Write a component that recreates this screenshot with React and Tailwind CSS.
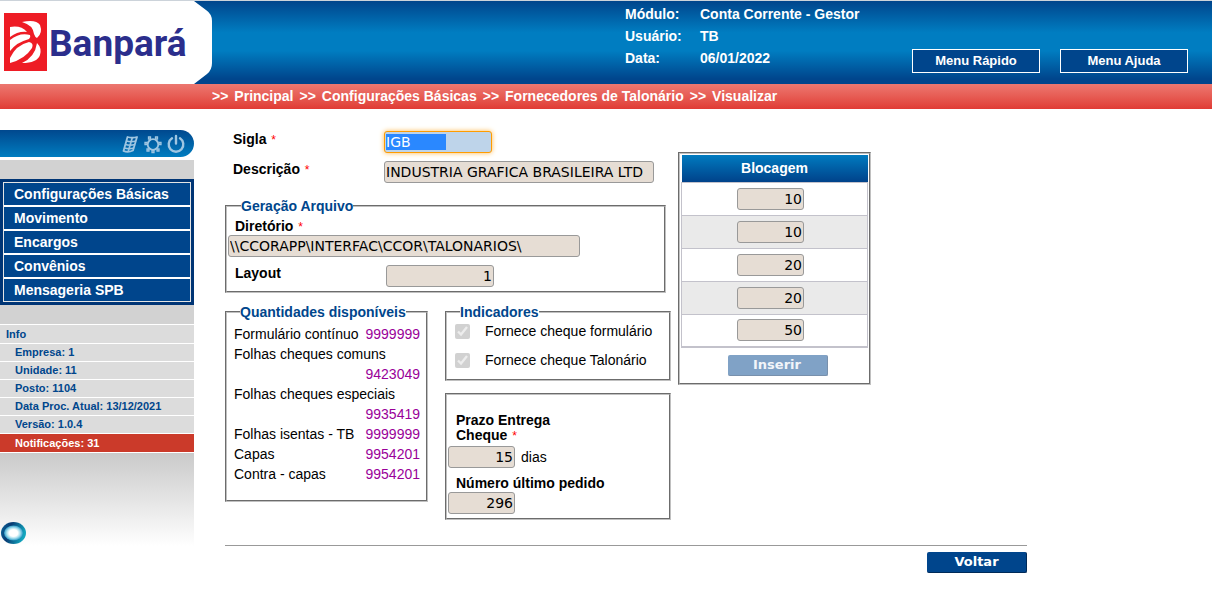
import { useEffect, useRef } from "react";

const inputBase =
  "h-[22px] rounded-[3px] border border-[#999] bg-[#e6ddd4] px-px font-['DejaVu_Sans',Verdana,sans-serif] text-[14px] leading-5 text-black outline-none";

const panel = "min-w-0 [border-style:groove] border-2 border-[#c0c0c0]";
const legend = "ml-[13px] text-[14px] font-bold leading-4 text-[#00468c]";

function Required() {
  return <span className="pl-px text-[12px] font-normal leading-none text-[#f00]">*</span>;
}

function Logo() {
  return (
    <div className="relative h-[83px] w-[213px] shrink-0">
      <svg className="absolute inset-0" width="213" height="83" viewBox="0 0 213 83" aria-hidden="true">
        <path d="M0 0H194L206 9Q212 13 212 20V62Q212 69 207 73L194 83H0Z" fill="#fff" />
        <rect x="4" y="12" width="43" height="58" fill="#ee1c25" />
        <path d="M10 26Q21 24 27 31Q18 30 10 36Z" fill="#fff" />
        <path d="M22 21Q36 18 40 24Q43 32 37 37Q35 36 34 33Q33 24 22 21Z" fill="#fff" />
        <path d="M10 39Q20 31 30 34Q31 36 29 38Q17 41 10 50Z" fill="#fff" />
        <path d="M10 62V57Q16 44 29 41Q34 42 32 47Q25 58 10 62Z" fill="#fff" />
        <path d="M37 42Q42 47 40 54Q37 62 22 62Q35 56 37 42Z" fill="#fff" />
      </svg>
      <span className="absolute left-[49px] top-5 font-[Roboto,sans-serif] text-[37px] font-bold leading-[46px] text-[#2b2e8c]">
        Banpará
      </span>
    </div>
  );
}

function Header() {
  const info = [
    ["Módulo:", "Conta Corrente - Gestor"],
    ["Usuário:", "TB"],
    ["Data:", "06/01/2022"],
  ];
  return (
    <header className="flex justify-between border-t border-[#ccd3da] bg-[linear-gradient(#00458c,#007dc1_38%,#007dc1_60%,#00458c_94%)] text-white">
      <Logo />
      <div className="flex items-end">
        <dl className="grid w-[287px] grid-cols-[75px_1fr] self-start pt-[2px] text-[14px] font-bold leading-[22px]">
          {info.map(([k, v]) => (
            <div key={k} className="contents">
              <dt>{k}</dt>
              <dd>{v}</dd>
            </div>
          ))}
        </dl>
        <div className="mb-[11px] mr-6 flex gap-5">
          {["Menu Rápido", "Menu Ajuda"].map((t) => (
            <button key={t} className="h-6 w-32 border border-white bg-[#00458c] text-[13px] font-bold leading-5">
              {t}
            </button>
          ))}
        </div>
      </div>
    </header>
  );
}

function Breadcrumb() {
  return (
    <nav aria-label="Caminho" className="bg-linear-to-b from-[#ec7770] to-[#e03a34] pl-[212px]">
      <ol className="flex gap-[6px] text-[14px] font-bold leading-[25px] text-white">
        {["Principal", "Configurações Básicas", "Fornecedores de Talonário", "Visualizar"].map((t) => (
          <li key={t} className="flex gap-[6px]">
            <span>&gt;&gt;</span>
            <a href="#">{t}</a>
          </li>
        ))}
      </ol>
    </nav>
  );
}

function Sidebar() {
  const menu = ["Configurações Básicas", "Movimento", "Encargos", "Convênios", "Mensageria SPB"];
  const info = ["Empresa: 1", "Unidade: 11", "Posto: 1104", "Data Proc. Atual: 13/12/2021", "Versão: 1.0.4"];
  return (
    <aside className="w-[194px] shrink-0 pt-[21px] font-bold">
      <div className="mb-[3px] flex h-[27px] items-center justify-end gap-1 rounded-r-[14px] bg-linear-to-b from-[#00488e] to-[#007dc0] pr-[9px] text-[#9fc6e2]">
        <button aria-label="Teclado">
          <svg width="18" height="18" viewBox="0 0 18 18" fill="none" stroke="currentColor" strokeLinejoin="round">
            <path d="M6.5 2Q11 3.5 16 2L12 15.5Q7 18 2.5 16Z" strokeWidth="1.8" />
            <path d="M5.5 6Q10 7.5 15 6M4.5 9.5Q9 11 14 9.5M3.5 13Q8 14.5 13 13M11.2 3L7.2 16.5" strokeWidth="1.7" />
          </svg>
        </button>
        <button aria-label="Configurações">
          <svg width="20" height="20" viewBox="0 0 20 20" fill="none" stroke="currentColor">
            <circle cx="10" cy="10.5" r="5.3" strokeWidth="1.8" />
            <path
              d="M5.5 3h2v2h-2zM12.500 3h2v2h-2zM2 8.500h2v2h-2zM16 8.500h2v2h-2zM4 15h2v2h-2zM14 15h2v2h-2zM9 16.500h2v2h-2z"
              strokeWidth="1.3"
            />
          </svg>
        </button>
        <button aria-label="Sair">
          <svg width="18" height="20" viewBox="0 0 18 20" fill="none" stroke="currentColor" strokeWidth="2.4" strokeLinecap="round">
            <path d="M5 4.3A7.3 7.3 0 1 0 13 4.3M9 2V9.5" />
          </svg>
        </button>
      </div>
      <div className="bg-[#d2d2d2] pt-[19px]">
        <div className="bg-[#003575] p-[3px]">
          <ul className="divide-y-2 divide-white border border-[#e4e4e4] bg-[#00458c] text-[14px] leading-[22px] text-white">
            {menu.map((t) => (
              <li key={t}>
                <a href="#" className="block pl-[10px]">
                  {t}
                </a>
              </li>
            ))}
          </ul>
        </div>
        <div className="mt-[19px] border-y border-white bg-[#dcdcdc] pl-[6px] text-[11px] leading-[18px] text-[#00468c]">
          Info
        </div>
      </div>
      <ul className="text-[11px] leading-[17px] text-[#00468c]">
        {info.map((t) => (
          <li key={t} className="border-b border-white bg-[#dcdcdc] pl-[15px]">
            {t}
          </li>
        ))}
        <li className="border-b border-white bg-[#cb3a2a] pl-[15px] leading-[18px] text-white">Notificações: 31</li>
      </ul>
      <div className="flex h-[93px] items-end bg-linear-to-b from-[#cacaca] to-white">
        <svg width="28" height="26" viewBox="0 0 28 26" aria-hidden="true">
          <defs>
            <linearGradient id="ring" x1="0" y1="0" x2="1" y2="0.3">
              <stop offset="0" stopColor="#0b6ba0" />
              <stop offset="0.4" stopColor="#083a72" />
              <stop offset="1" stopColor="#12a5bd" />
            </linearGradient>
            <radialGradient id="core">
              <stop offset="0.45" stopColor="#fff" />
              <stop offset="0.7" stopColor="#a9e0ee" />
              <stop offset="1" stopColor="#2f9cc8" />
            </radialGradient>
          </defs>
          <ellipse cx="13.5" cy="13" rx="12.5" ry="11" fill="url(#ring)" />
          <ellipse cx="13.5" cy="13" rx="9.5" ry="7.5" fill="url(#core)" />
        </svg>
      </div>
    </aside>
  );
}

function Identification() {
  const ref = useRef(null);
  useEffect(() => {
    ref.current.focus();
    ref.current.select();
  }, []);
  return (
    <div className="grid grid-cols-[151px_1fr] gap-y-2 pl-2 text-[14px] font-bold">
      <label htmlFor="sigla" className="leading-4">
        Sigla <Required />
      </label>
      <input
        ref={ref}
        id="sigla"
        readOnly
        defaultValue="IGB        "
        className={`${inputBase} w-[108px] font-normal focus:border-[#ff9c00] focus:bg-[#bed4ea] focus:shadow-[0_0_5px_#ffb84d] selection:bg-[#2a88ff] selection:text-white`}
      />
      <label htmlFor="descricao" className="leading-4">
        Descrição <Required />
      </label>
      <input id="descricao" readOnly defaultValue="INDUSTRIA GRAFICA BRASILEIRA LTD" className={`${inputBase} w-[270px] font-normal`} />
    </div>
  );
}

function FilePanel() {
  return (
    <fieldset className={`${panel} mt-[15px] w-[441px] pb-1 pl-px`}>
      <legend className={legend}>Geração Arquivo</legend>
      <label htmlFor="diretorio" className="block pl-[7px] pt-[3px] text-[14px] font-bold leading-[18px]">
        Diretório <Required />
      </label>
      <input id="diretorio" readOnly defaultValue="\\CCORAPP\INTERFAC\CCOR\TALONARIOS\" className={`${inputBase} block w-[352px]`} />
      <div className="mt-2 grid grid-cols-[151px_1fr] pl-[7px]">
        <label htmlFor="layout" className="text-[14px] font-bold leading-4">
          Layout
        </label>
        <input id="layout" readOnly defaultValue="1" className={`${inputBase} w-[108px] text-right`} />
      </div>
    </fieldset>
  );
}

function Quantities() {
  const rows = [
    ["Formulário contínuo", "9999999"],
    ["Folhas cheques comuns", "9423049"],
    ["Folhas cheques especiais", "9935419"],
    ["Folhas isentas - TB", "9999999"],
    ["Capas", "9954201"],
    ["Contra - capas", "9954201"],
  ];
  return (
    <fieldset className={`${panel} w-[203px] pb-4`}>
      <legend className={legend}>Quantidades disponíveis</legend>
      <dl className="pl-[7px] pr-[6px] pt-1 text-[14px] leading-5">
        {rows.map(([k, v]) => (
          <div key={k} className="flex flex-wrap">
            <dt>{k}</dt>
            <dd className="ml-auto text-[#909]">{v}</dd>
          </div>
        ))}
      </dl>
    </fieldset>
  );
}

function Indicators() {
  return (
    <fieldset className={`${panel} w-[226px] pb-[9px]`}>
      <legend className={legend}>Indicadores</legend>
      <div className="flex flex-col gap-[9px] pl-2 pt-px text-[14px] leading-5">
        {["Fornece cheque formulário", "Fornece cheque Talonário"].map((t) => (
          <label key={t} className="flex items-center gap-[15px]">
            <input type="checkbox" disabled defaultChecked className="size-[15px]" />
            {t}
          </label>
        ))}
      </div>
    </fieldset>
  );
}

function Delivery() {
  return (
    <fieldset className={`${panel} w-[226px] pb-1 pl-px pt-[18px] text-[14px]`}>
      <label htmlFor="prazo" className="block pl-2 font-bold leading-[15px]">
        <span className="block">Prazo Entrega</span>
        <span className="block">
          Cheque <Required />
        </span>
      </label>
      <div className="mt-[3px] flex items-center gap-[6px]">
        <input id="prazo" readOnly defaultValue="15" className={`${inputBase} w-[67px] text-right`} />
        <span>dias</span>
      </div>
      <label htmlFor="pedido" className="mt-[6px] block pl-2 font-bold leading-[18px]">
        Número último pedido
      </label>
      <input id="pedido" readOnly defaultValue="296" className={`${inputBase} block w-[67px] text-right`} />
    </fieldset>
  );
}

function Blocks() {
  const rows = [10, 10, 20, 20, 50];
  return (
    <fieldset className={`${panel} mt-[21px] w-[193px] self-start p-px pb-[7px]`}>
      <table className="w-full border-collapse">
        <thead>
          <tr>
            <th className="h-[27px] bg-linear-to-b from-[#007bc0] to-[#00428a] text-[14px] font-bold leading-5 text-white">Blocagem</th>
          </tr>
        </thead>
        <tbody className="border-x border-b-2 border-[#c3c2cb]">
          {rows.map((v, i) => (
            <tr key={i} className="h-[33px] border-t border-[#c3c2cb] even:bg-[#eaeaea]">
              <td className="pr-2">
                <input aria-label={`Blocagem ${i + 1}`} readOnly defaultValue={v} className={`${inputBase} mx-auto block w-[67px] text-right`} />
              </td>
            </tr>
          ))}
        </tbody>
      </table>
      <div className="flex justify-center pl-[6px] pt-[7px]">
        <button
          disabled
          className="h-[21px] w-[100px] rounded-[2px] border-b border-r border-[#7890ac] bg-[#80a2c6] font-['DejaVu_Sans',Verdana,sans-serif] text-[13px] font-bold leading-5 text-[#f2f5f9]"
        >
          Inserir
        </button>
      </div>
    </fieldset>
  );
}

export default function App() {
  return (
    <div className="bg-white font-['Liberation_Sans',Arial,sans-serif] text-black">
      <Header />
      <Breadcrumb />
      <div className="flex">
        <Sidebar />
        <main className="ml-[31px] max-w-[802px] flex-1 pt-[22px]">
          <div className="flex gap-[7px]">
            <div className="w-[446px]">
              <Identification />
              <FilePanel />
              <div className="mt-[11px] flex items-start gap-[17px]">
                <Quantities />
                <div className="flex flex-col gap-3">
                  <Indicators />
                  <Delivery />
                </div>
              </div>
            </div>
            <Blocks />
          </div>
          <div className="mt-[25px] flex justify-end border-t border-[#999] pt-[6px]">
            <button className="h-[21px] w-[100px] rounded-[2px] border-b border-r border-[#002a58] bg-[#00458c] font-['DejaVu_Sans',Verdana,sans-serif] text-[13px] font-bold leading-5 text-white">
              Voltar
            </button>
          </div>
        </main>
      </div>
    </div>
  );
}
